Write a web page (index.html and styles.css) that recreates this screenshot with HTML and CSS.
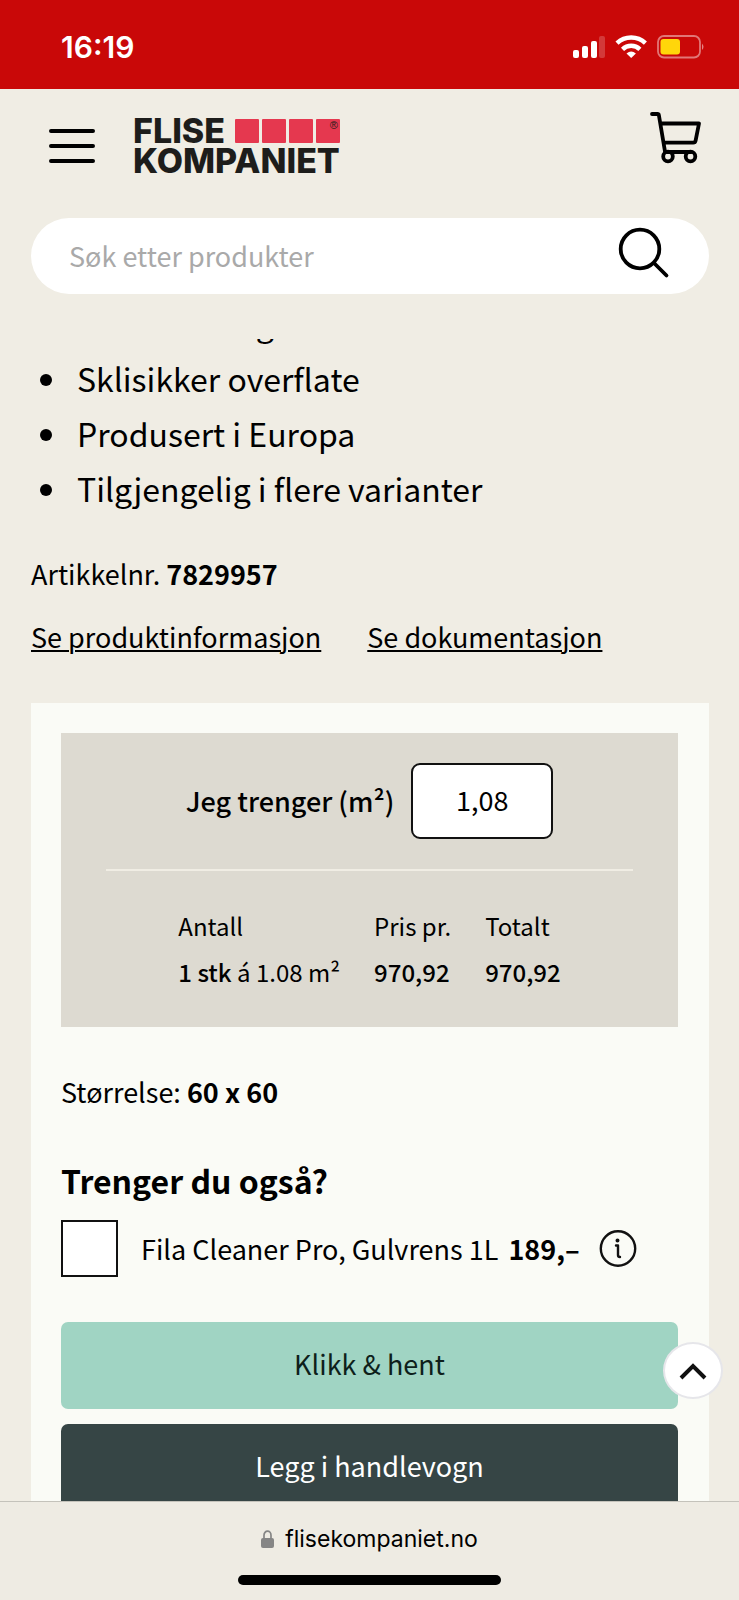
FILE: index.html
```
<!DOCTYPE html>
<html lang="no">
<head>
<meta charset="utf-8">
<meta name="viewport" content="width=device-width, initial-scale=1">
<title>Flisekompaniet</title>
<link rel="stylesheet" href="styles.css">
</head>
<body>
<div class="screen">
  <div class="status">
    <span class="status-time">16:19</span>
    <svg class="status-icons" width="132" height="24" viewBox="0 0 132 24" aria-hidden="true">
      <g fill="#fff">
        <rect x="0" y="15" width="6" height="8" rx="2"/>
        <rect x="9" y="11" width="6" height="12" rx="2"/>
        <rect x="18" y="6" width="6" height="17" rx="2"/>
        <rect x="26" y="1" width="6" height="22" rx="2" opacity=".2"/>
      </g>
      <g fill="none" stroke="#fff" stroke-width="4.4">
        <path d="M44 8.200a20.500 20.500 0 0 1 28.400 0"/>
        <path d="M49.500 14.300a12.600 12.600 0 0 1 17.400 0"/>
      </g>
      <path fill="#fff" d="M53.500 18.500q4.700-3.800 9.400 0L58.200 23z"/>
      <rect x="85" y="1" width="42" height="21.500" rx="6" fill="none" stroke="#fff" stroke-width="1.800" opacity=".45"/>
      <rect x="87.500" y="4" width="19.500" height="15.500" rx="3" fill="#ffd60a"/>
      <path d="M129 8.500q3 3.300 0 6.600z" fill="#fff" opacity=".5"/>
    </svg>
  </div>

  <header class="header">
    <div class="header-row">
      <button class="icon-button" type="button" aria-label="Meny">
        <svg width="46" height="36" viewBox="0 0 46 36" stroke="#000" stroke-width="4" stroke-linecap="round"><path d="M2 3h42M2 18h42M2 33h42"/></svg>
      </button>
      <a class="logo" href="#">
        <span class="logo-line">FLISE
          <span class="tiles"><i></i><i></i><i></i><i class="tile-mark">®</i></span>
        </span>
        <span class="logo-line">KOMPANIET</span>
      </a>
      <button class="icon-button cart" type="button" aria-label="Handlevogn">
        <svg width="52" height="52" viewBox="0 0 52 52" fill="none" stroke="#000" stroke-width="3.800" stroke-linecap="round" stroke-linejoin="round">
          <path d="M2 2h5.500q1.200 0 1.400 1.200L15 39.500M10.500 11.500H49l-3.400 17.200q-.4 2-2.400 2H13.500M17 40h24"/>
          <circle cx="18" cy="44.500" r="4.800"/><circle cx="40.500" cy="44.500" r="4.800"/>
        </svg>
      </button>
    </div>
    <form class="search">
      <input class="search-input" type="search" placeholder="Søk etter produkter" aria-label="Søk etter produkter">
      <button class="icon-button" type="button" aria-label="Søk">
        <svg width="52" height="52" viewBox="0 0 52 52" fill="none" stroke="#000" stroke-width="3.800" stroke-linecap="round"><circle cx="22" cy="22" r="19.300"/><path d="M36 36l12.500 12.500"/></svg>
      </button>
    </form>
  </header>

  <main class="content">
    <ul class="features">
      <li>Innendørs og utendørs</li>
      <li>Sklisikker overflate</li>
      <li>Produsert i Europa</li>
      <li>Tilgjengelig i flere varianter</li>
    </ul>
    <p class="article">Artikkelnr. <b>7829957</b></p>
    <nav class="links">
      <a href="#">Se produktinformasjon</a>
      <a href="#">Se dokumentasjon</a>
    </nav>

    <section class="card">
      <div class="calc">
        <div class="amount">
          <label for="area">Jeg trenger (m²)</label>
          <input id="area" class="amount-input" type="text" inputmode="decimal" value="1,08">
        </div>
        <table class="prices">
          <thead><tr><th>Antall</th><th>Pris pr.</th><th>Totalt</th></tr></thead>
          <tbody><tr><td><b>1 stk</b> á 1.08 m²</td><td><b>970,92</b></td><td><b>970,92</b></td></tr></tbody>
        </table>
      </div>
      <p class="size">Størrelse: <b>60 x 60</b></p>
      <h2 class="extras-title">Trenger du også?</h2>
      <div class="extra">
        <input id="cleaner" class="extra-check" type="checkbox">
        <label for="cleaner">Fila Cleaner Pro, Gulvrens 1L <b class="extra-price">189,–</b></label>
        <button class="icon-button" type="button" aria-label="Mer informasjon">
          <svg width="38" height="38" viewBox="0 0 38 38" fill="none" stroke="#111" stroke-width="2.400" stroke-linecap="round" stroke-linejoin="round"><circle cx="19" cy="18.500" r="17.200"/><path d="M17 15.500h2V25q0 2 2 2"/><circle cx="18.500" cy="10.500" r="1.200" fill="#111" stroke-width="1.600"/></svg>
        </button>
      </div>
      <div class="actions">
        <button class="action collect" type="button">Klikk &amp; hent</button>
        <button class="action add" type="button">Legg i handlevogn</button>
      </div>
    </section>
  </main>

  <footer class="browser-bar">
    <button class="to-top" type="button" aria-label="Til toppen">
      <svg width="28" height="18" viewBox="0 0 28 18" fill="none" stroke="#111" stroke-width="4"><path d="M2 16L14 4l12 12"/></svg>
    </button>
    <div class="address">
      <svg width="14" height="18" viewBox="0 0 14 18" aria-hidden="true"><rect x="0" y="8" width="13" height="10" rx="2" fill="#858585"/><path d="M3 9V5.200a3.500 4 0 0 1 7 0V9" fill="none" stroke="#858585" stroke-width="1.700"/></svg>
      <span>flisekompaniet.no</span>
    </div>
    <div class="home-indicator"></div>
  </footer>
</div>
</body>
</html>
```
FILE: styles.css
```
* { box-sizing: border-box; }

body {
  margin: 0;
  background: #f0ede4;
  color: #000;
  font-family: "Noto Sans CJK JP", "Noto Sans", sans-serif;
  font-size: 27px;
  line-height: 40px;
}

p, h2, ul { margin: 0; }

button, input { font: inherit; color: inherit; }

svg { display: block; }

.screen {
  display: flex;
  flex-direction: column;
  height: 100vh;
  overflow: hidden;
}

.status {
  flex: none;
  display: flex;
  align-items: center;
  justify-content: space-between;
  height: 89px;
  padding: 5px 34px 0 61px;
  background: #c90808;
  color: #fff;
  font-family: Inter, sans-serif;
}

.status-time { font-size: 30px; font-weight: 600; }

/* Covers the top of the scrolled content */
.header {
  flex: none;
  position: relative;
  z-index: 1;
  margin-bottom: -43px;
  padding: 23px 30px 45px 31px;
  background: #f0ede4;
}

.header-row {
  display: flex;
  align-items: center;
  min-height: 68px;
  padding: 0 7px 0 18px;
}

.icon-button {
  flex: none;
  padding: 0;
  border: 0;
  background: none;
}

.cart { align-self: flex-start; margin-left: auto; }

.logo {
  display: grid;
  gap: 6px;
  margin-left: 38px;
  color: #1d1d1b;
  font-family: Inter, sans-serif;
  font-size: 34px;
  font-weight: 800;
  line-height: 24px;
  text-decoration: none;
}

.logo-line { display: flex; justify-content: space-between; }

.tiles { display: flex; gap: 3px; }

.tiles i {
  width: 24px;
  height: 24px;
  border-radius: 1px;
  background: #e5384f;
}

.tiles .tile-mark {
  padding-right: 2px;
  font: 11px/13px "Liberation Sans", sans-serif;
  text-align: right;
}

.search {
  display: flex;
  align-items: center;
  height: 76px;
  margin-top: 38px;
  padding: 0 39px 6px 38px;
  border-radius: 38px;
  background: #fff;
}

.search-input {
  flex: 1;
  min-width: 0;
  padding: 6px 0 0;
  border: 0;
  outline: 0;
  background: none;
}

.search-input::placeholder { color: #a9a9a9; opacity: 1; }

.content {
  flex: 1;
  min-height: 0;
  overflow: hidden;
  padding: 0 30px 0 31px;
}

.features {
  padding: 0;
  font-size: 32px;
  line-height: 55px;
  list-style: none;
}

.features li {
  display: flex;
  align-items: center;
  gap: 25px;
  padding-left: 9px;
}

.features li::before {
  content: "";
  width: 12px;
  height: 12px;
  margin-top: 3px;
  border-radius: 50%;
  background: #000;
}

.article { margin-top: 38px; }

.links { display: flex; gap: 46px; margin-top: 23px; }

.links a {
  color: inherit;
  text-decoration-thickness: 2px;
  text-underline-offset: 2px;
}

.card {
  margin-top: 46px;
  padding: 30px 31px 30px 30px;
  background: #fafbf6;
}

.calc {
  padding: 30px 45px 32px;
  background: #dddad1;
}

.amount {
  display: flex;
  align-items: center;
  justify-content: center;
  gap: 17px;
  padding-bottom: 30px;
  border-bottom: 2px solid #f0ede4;
  font-weight: 500;
}

.amount-input {
  width: 142px;
  height: 76px;
  padding: 0 0 4px;
  border: 2px solid #111;
  border-radius: 9px;
  background: #fff;
  font-weight: 400;
  text-align: center;
}

.prices {
  margin: 32px auto 0;
  border-collapse: collapse;
  font-size: 24px;
  line-height: 46px;
}

.prices th, .prices td {
  padding: 0 34px 0 0;
  font-weight: 400;
  text-align: left;
}

.prices th:last-child, .prices td:last-child { padding-right: 0; }

.prices b { font-weight: 500; }

.size { margin-top: 45px; }

.extras-title {
  margin-top: 45px;
  font-size: 32px;
  line-height: 46px;
}

.extra {
  display: flex;
  align-items: center;
  gap: 23px;
  margin-top: 17px;
}

.extra .icon-button { margin-left: -4px; }

.extra-price { margin-left: 4px; }

.extra-check {
  flex: none;
  appearance: none;
  width: 57px;
  height: 57px;
  margin: 0;
  border: 2px solid #111;
  background: #fff;
}

.actions { display: grid; gap: 15px; margin-top: 45px; }

.action {
  height: 87px;
  padding: 0 0 4px;
  border: 0;
  border-radius: 7px;
}

.collect { background: #a0d4c3; color: #0e1f1b; }

.add { background: #364545; color: #fff; }

.browser-bar {
  flex: none;
  position: relative;
  display: flex;
  flex-direction: column;
  align-items: center;
  gap: 16px;
  padding: 17px 30px 15px;
  border-top: 1px solid #c4c2bb;
  background: #eeebe3;
}

/* Floats above the page, at the edge of the card */
.to-top {
  position: absolute;
  right: 16px;
  bottom: 201px;
  display: grid;
  place-items: center;
  width: 60px;
  height: 57px;
  padding: 0;
  border: 2px solid #e6e6ea;
  border-radius: 50%;
  background: #fff;
}

.address {
  display: flex;
  align-items: center;
  gap: 10px;
  font-family: Inter, sans-serif;
  font-size: 23px;
}

.home-indicator {
  width: 263px;
  height: 10px;
  border-radius: 5px;
  background: #000;
}
```
